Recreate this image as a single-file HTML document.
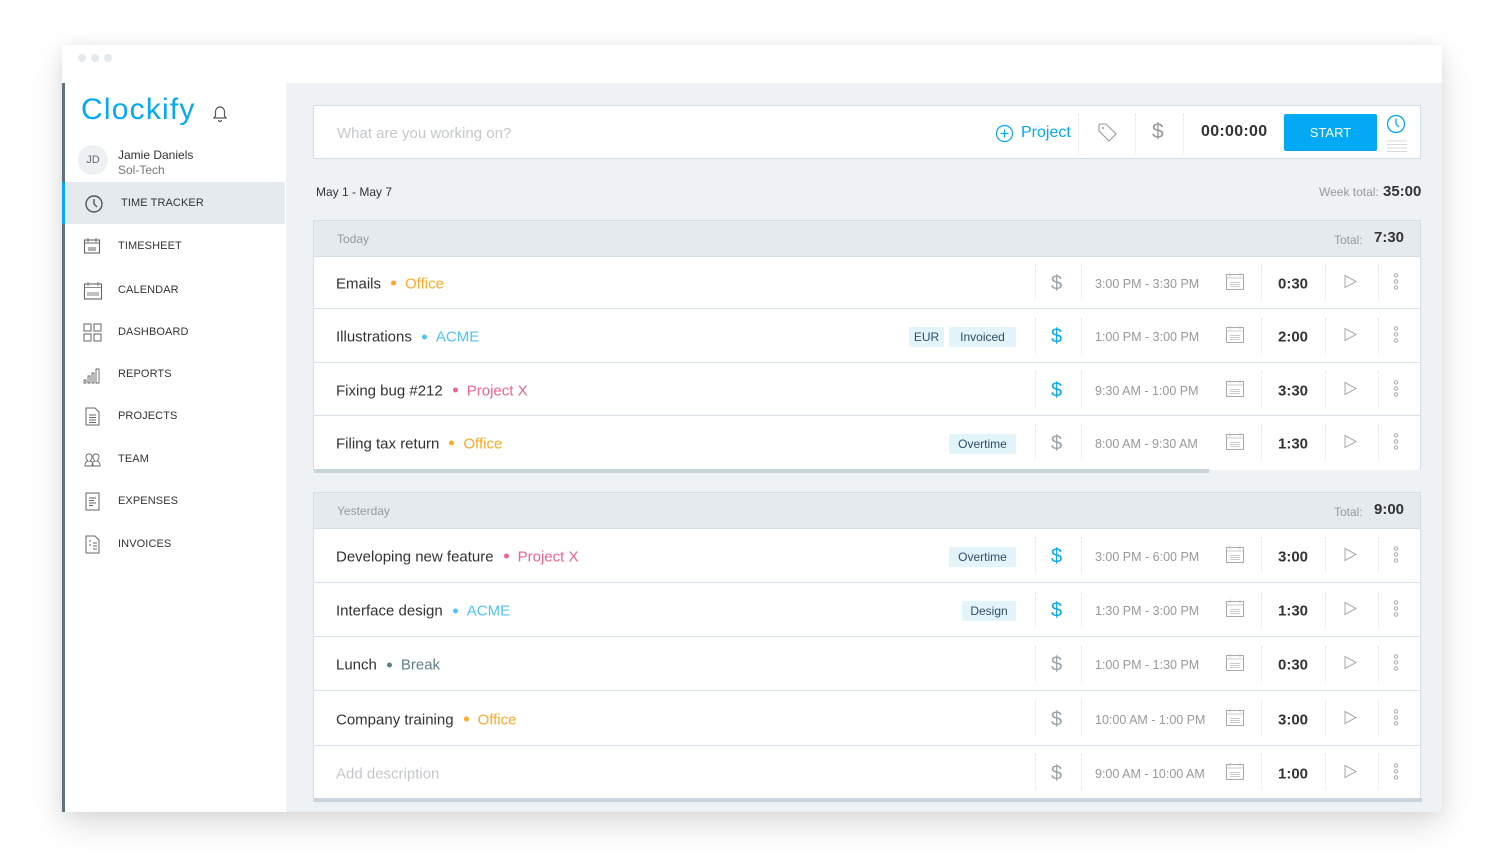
<!DOCTYPE html>
<html><head><meta charset="utf-8">
<style>
*{box-sizing:border-box;margin:0;padding:0}
body{width:1504px;height:857px;background:#fff;position:relative;overflow:hidden;font-family:"Liberation Sans",sans-serif;color:#333}
.win{position:absolute;left:62px;top:45px;width:1380px;height:767px;background:#fff;box-shadow:0 12px 30px rgba(0,0,0,0.14),0 0 12px rgba(0,0,0,0.05);overflow:hidden}
.dot{position:absolute;top:9px;width:8px;height:8px;border-radius:50%;background:#e4e9ee}
.side{position:absolute;left:0;top:38px;width:223px;height:729px;background:#fff;border-left:3px solid #5f7280}
.main{position:absolute;left:224px;top:38px;width:1156px;height:729px;background:#eef2f5}
.a{position:absolute}
.nav{position:absolute;left:0;width:220px;height:42px;font-size:11px;color:#333;letter-spacing:0.1px}
.nav span{position:absolute;left:53px;top:15px}
.nav svg{position:absolute;left:18px;top:12px}
.card{position:absolute;left:313px;width:1108px;background:#fff;border:1px solid #d3dde4}
.hdr{position:absolute;left:0;top:0;width:100%;height:36px;background:#e4eaee;border-bottom:1px solid #d3dde4}
.row{position:absolute;left:0;width:100%;border-bottom:1px solid #d9e2e8}
.row>*{position:absolute;top:53%;transform:translateY(-50%)}
.row>.sep{top:50%}
.desc{left:23px;font-size:15px;color:#333;white-space:nowrap}
.desc b{display:inline-block;width:5px;height:5px;border-radius:50%;margin:0 9px 0 10px;vertical-align:middle;position:relative;top:-1px}
.sep{width:0;height:36px;border-left:1px dotted #dde3e8}
.dol{left:738px;font-size:20px;color:#9aa3a8;font-weight:300}
.dol.b{color:#03a9f4}
.tm{left:782px;font-size:12.5px;color:#999}
.cal{left:912px}
.dur{left:948px;width:64px;text-align:center;font-size:15px;font-weight:bold;color:#333}
.play{left:1029px}
.dots{left:1080px}
.tag{height:20px;line-height:20px;background:#e3f4fb;color:#2b4f66;font-size:12px;border-radius:2px;text-align:center}
</style></head><body>
<div class="win">
 <div class="dot" style="left:16px"></div><div class="dot" style="left:29px"></div><div class="dot" style="left:42px"></div>
 <div class="side">
  <div class="a" style="left:16px;top:10px;font-size:30px;color:#03a9f4;letter-spacing:1.2px">Clockify</div>
  <svg class="a" style="left:147px;top:22px" width="16" height="18" viewBox="0 0 16 18"><path d="M8 2c-3 0-4.5 2.5-4.5 5v4L2 13h12l-1.5-2V7c0-2.5-1.5-5-4.5-5zM6.5 15a1.5 1.5 0 003 0" fill="none" stroke="#555" stroke-width="1.2"/></svg>
  <div class="a" style="left:13px;top:62px;width:30px;height:30px;border-radius:50%;background:#edf1f4;color:#667;font-size:11px;text-align:center;line-height:30px">JD</div>
  <div class="a" style="left:53px;top:65px;font-size:12px;color:#333">Jamie Daniels</div>
  <div class="a" style="left:53px;top:80px;font-size:12px;color:#777">Sol-Tech</div>
  <div class="nav" style="top:99px;background:#e4eaee;border-left:3px solid #03a9f4;left:-3px;width:223px"><svg width="20" height="20" viewBox="0 0 20 20" style="left:19px"><circle cx="10" cy="10" r="8" fill="none" stroke="#555" stroke-width="1.4"/><path d="M10 5v5l3 3" fill="none" stroke="#555" stroke-width="1.4"/></svg><span style="left:56px">TIME TRACKER</span></div>
  <div class="nav" style="top:142px"><svg width="18" height="18" viewBox="0 0 18 18"><rect x="1.5" y="3" width="15" height="13" fill="none" stroke="#666" stroke-width="1.1"/><path d="M1.5 6h15M5 1v4M13 1v4M5 11h8M5 13h8" stroke="#666" stroke-width="0.9"/></svg><span>TIMESHEET</span></div>
  <div class="nav" style="top:186px"><svg width="20" height="20" viewBox="0 0 20 20"><rect x="1.5" y="3" width="17" height="15" fill="none" stroke="#666" stroke-width="1.1"/><path d="M1.5 6.5h17M5 1v4M15 1v4M5 11v4M7 11v4M9 11v4M11 11v4M13 11v4M15 11v4" stroke="#666" stroke-width="0.8"/></svg><span>CALENDAR</span></div>
  <div class="nav" style="top:228px"><svg width="19" height="19" viewBox="0 0 19 19"><rect x="1" y="1" width="7" height="7" fill="none" stroke="#666"/><rect x="11" y="1" width="7" height="7" fill="none" stroke="#666"/><rect x="1" y="11" width="7" height="7" fill="none" stroke="#666"/><rect x="11" y="11" width="7" height="7" fill="none" stroke="#666"/></svg><span>DASHBOARD</span></div>
  <div class="nav" style="top:270px"><svg width="19" height="19" viewBox="0 0 19 19"><path d="M1 15h2v3H1zM5 11h2v7H5zM9 8h2v10H9zM13 4h3v14h-3z" fill="none" stroke="#666" stroke-width="0.9"/></svg><span>REPORTS</span></div>
  <div class="nav" style="top:312px"><svg width="19" height="19" viewBox="0 0 19 19"><path d="M3 1h9l4 4v13H3z" fill="none" stroke="#666"/><path d="M6 8h7M6 10.5h7M6 13h7M6 15.5h7" stroke="#666" stroke-width="0.9"/></svg><span>PROJECTS</span></div>
  <div class="nav" style="top:355px"><svg width="20" height="19" viewBox="0 0 20 19"><path d="M2 16c0-4 2-5 3-5-1-1-2-2-2-4s1-3 3-3 3 1 3 3-1 3-2 4c1 0 3 1 3 5zM9 16c0-4 2-5 3-5-1-1-2-2-2-4s1-3 3-3 3 1 3 3-1 3-2 4c1 0 3 1 3 5z" fill="none" stroke="#666" stroke-width="0.9"/></svg><span>TEAM</span></div>
  <div class="nav" style="top:397px"><svg width="19" height="19" viewBox="0 0 19 19"><rect x="3" y="1" width="13" height="17" fill="none" stroke="#666"/><path d="M6 6h7M6 8.5h5M6 11h7M6 13.5h4" stroke="#666" stroke-width="0.9"/></svg><span>EXPENSES</span></div>
  <div class="nav" style="top:440px"><svg width="19" height="19" viewBox="0 0 19 19"><path d="M3 1h9l4 4v13H3z" fill="none" stroke="#666"/><path d="M6 6h2M6 10h2M10 8h4M10 11h4M10 14h4" stroke="#666" stroke-width="0.9"/></svg><span>INVOICES</span></div>
 </div>
 <div class="main"></div>
</div>

<div class="a" style="left:313px;top:105px;width:1108px;height:54px;background:#fff;border:1px solid #d3dde4">
 <div class="a" style="left:23px;top:19px;font-size:15px;color:#c4c8cc">What are you working on?</div>
 <svg class="a" style="left:681px;top:18px" width="19" height="19" viewBox="0 0 19 19"><circle cx="9.5" cy="9.5" r="8" fill="none" stroke="#03a9f4" stroke-width="1.2"/><path d="M9.5 5.5v8M5.5 9.5h8" stroke="#03a9f4" stroke-width="1.2"/></svg>
 <div class="a" style="left:707px;top:18px;font-size:16px;color:#03a9f4">Project</div>
 <div class="a" style="left:764px;top:8px;height:40px;border-left:1px dotted #dde3e8"></div>
 <svg class="a" style="left:783px;top:16px" width="21" height="21" viewBox="0 0 21 21"><path d="M2 3v6l10 10 7-7L9 2H3z" fill="none" stroke="#999" stroke-width="1.1"/><circle cx="6" cy="6" r="1" fill="#999"/></svg>
 <div class="a" style="left:821px;top:8px;height:40px;border-left:1px dotted #dde3e8"></div>
 <div class="a" style="left:838px;top:14px;font-size:21px;color:#999;font-weight:300">$</div>
 <div class="a" style="left:869px;top:8px;height:40px;border-left:1px dotted #dde3e8"></div>
 <div class="a" style="left:887px;top:17px;font-size:16px;color:#333;font-weight:bold;letter-spacing:0.3px">00:00:00</div>
 <div class="a" style="left:970px;top:8px;width:93px;height:37px;background:#03a9f4;color:#fff;font-size:13px;text-align:center;line-height:37px;border-radius:2px">START</div>
 <svg class="a" style="left:1072px;top:8px" width="20" height="20" viewBox="0 0 20 20"><circle cx="10" cy="10" r="8.5" fill="none" stroke="#03a9f4" stroke-width="1.3"/><path d="M10 4.5v5.5l3 3" fill="none" stroke="#03a9f4" stroke-width="1.3"/></svg>
 <svg class="a" style="left:1073px;top:34px" width="20" height="14" viewBox="0 0 20 14"><path d="M0 1h20M0 4.5h20M0 8h20M0 11.5h20" stroke="#ccc" stroke-width="0.8"/></svg>
</div>

<div class="a" style="left:316px;top:185px;font-size:12px;color:#333">May 1 - May 7</div>
<div class="a" style="left:1319px;top:185px;font-size:12px;color:#999">Week total:</div>
<div class="a" style="left:1383px;top:183px;font-size:15px;color:#333;font-weight:bold">35:00</div>

<div class="card" style="top:220px;height:250px;border-bottom:none">
 <div class="hdr"><div class="a" style="left:23px;top:11px;font-size:12px;color:#999">Today</div><div class="a" style="left:1020px;top:12px;font-size:12px;color:#999">Total:</div><div class="a" style="left:1060px;top:8px;font-size:15px;font-weight:bold;color:#333">7:30</div></div>
 <div class="a" style="left:0;top:248px;width:895px;height:4px;background:#c9d4db"></div>
</div>
<div class="card" style="top:492px;height:310px;border-bottom:none">
 <div class="hdr"><div class="a" style="left:23px;top:11px;font-size:12px;color:#999">Yesterday</div><div class="a" style="left:1020px;top:12px;font-size:12px;color:#999">Total:</div><div class="a" style="left:1060px;top:8px;font-size:15px;font-weight:bold;color:#333">9:00</div></div>
 <div class="a" style="left:0;top:305px;width:1108px;height:4px;background:#c9d4db"></div>
</div>

<div id="rows"></div>
<script>
const cal='<svg width="20" height="20" viewBox="0 0 20 20"><rect x="1.5" y="3" width="17" height="15" fill="none" stroke="#aaa" stroke-width="1"/><path d="M1.5 6.5h17M5 1v4M15 1v4M5 11h10M5 13h10M5 15h10" stroke="#bbb" stroke-width="0.7"/></svg>';
const play='<svg width="16" height="16" viewBox="0 0 16 16"><path d="M3 2l11 6-11 6z" fill="none" stroke="#aaa" stroke-width="1"/></svg>';
const dots='<svg width="6" height="18" viewBox="0 0 6 18"><circle cx="3" cy="3" r="1.7" fill="none" stroke="#aaa"/><circle cx="3" cy="9" r="1.7" fill="none" stroke="#aaa"/><circle cx="3" cy="15" r="1.7" fill="none" stroke="#aaa"/></svg>';
const rows=[
 [256,53,'Emails','Office','#ffa726',[],0,'3:00 PM - 3:30 PM','0:30'],
 [309,54,'Illustrations','ACME','#4fc3f7',['EUR','Invoiced'],1,'1:00 PM - 3:00 PM','2:00'],
 [363,53,'Fixing bug #212','Project X','#f06292',[],1,'9:30 AM - 1:00 PM','3:30'],
 [416,52,'Filing tax return','Office','#ffa726',['Overtime'],0,'8:00 AM - 9:30 AM','1:30'],
 [528,55,'Developing new feature','Project X','#f06292',['Overtime'],1,'3:00 PM - 6:00 PM','3:00'],
 [583,54,'Interface design','ACME','#4fc3f7',['Design'],1,'1:30 PM - 3:00 PM','1:30'],
 [637,54,'Lunch','Break','#607d8b',[],0,'1:00 PM - 1:30 PM','0:30'],
 [691,55,'Company training','Office','#ffa726',[],0,'10:00 AM - 1:00 PM','3:00'],
 [746,52,'','','',[],0,'9:00 AM - 10:00 AM','1:00'],
];
let h='';
rows.forEach((r,i)=>{
 const last=(i==3||i==8);
 let d=r[2]?`<div class="desc">${r[2]}<b style="background:${r[4]}"></b><span style="color:${r[4]}">${r[3]}</span></div>`:`<div class="desc" style="color:#c4c8cc">Add description</div>`;
 let tags='';let x=703;
 for(let k=r[5].length-1;k>=0;k--){const t=r[5][k];const w=Math.round(t.length*6.4+16);x-=w;tags+=`<div class="tag" style="left:${x}px;width:${w}px">${t}</div>`;x-=5;}
 h+=`<div class="row" style="left:313px;top:${r[0]}px;height:${r[1]}px;width:1108px;${last?'border-bottom:none':''}">${d}${tags}
 <div class="sep" style="left:722px"></div><div class="dol ${r[6]?'b':''}">$</div><div class="sep" style="left:768px"></div>
 <div class="tm">${r[7]}</div><div class="cal">${cal}</div><div class="sep" style="left:948px"></div>
 <div class="dur">${r[8]}</div><div class="sep" style="left:1012px"></div><div class="play">${play}</div>
 <div class="sep" style="left:1065px"></div><div class="dots">${dots}</div></div>`;
});
document.getElementById('rows').innerHTML=h;
</script>
</body></html>
